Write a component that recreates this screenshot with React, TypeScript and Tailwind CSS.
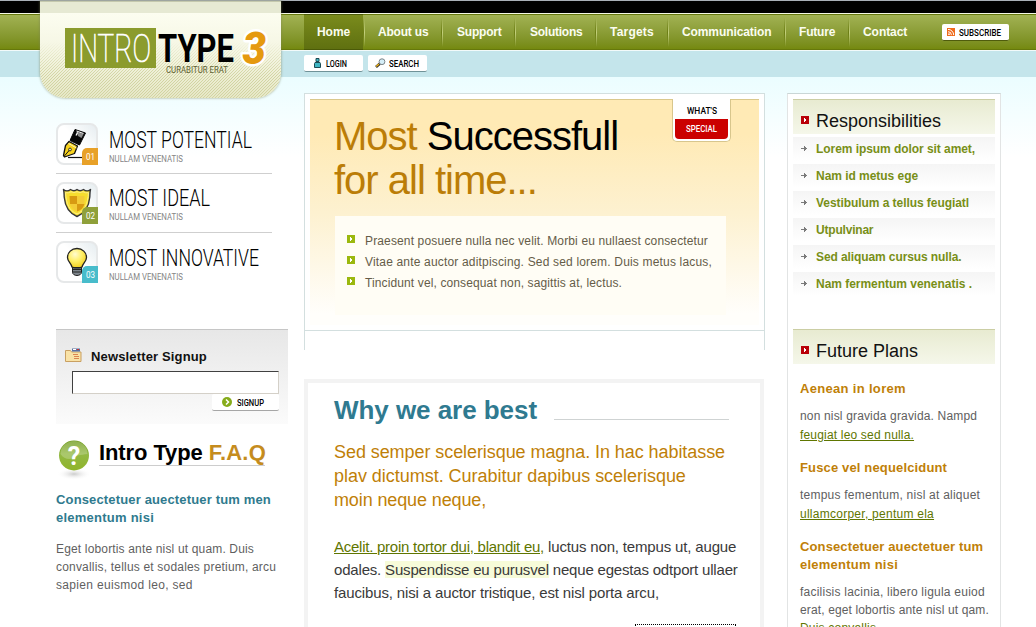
import React from 'react';
import clsx from 'clsx';

// Text squeezed or stretched to a fixed width, used for the condensed and tiny caps lettering
const FitText: React.FC<{
  text: string;
  width: number;
  height: number;
  size: number;
  className?: string;
}> = ({ text, width, height, size, className }) => (
  <svg width={width} height={height} className={clsx('block shrink-0 overflow-visible font-[Roboto,sans-serif]', className)}>
    <text x={0} y={height} fontSize={size} textLength={width} lengthAdjust="spacingAndGlyphs" fill="currentColor">
      {text}
    </text>
  </svg>
);

const navItems = [
  { label: 'Home', box: 'w-[61px] pl-[13px]', tracking: 'tracking-[-0.05px]', active: true },
  { label: 'About us', box: 'w-[78px] pl-[13px]', tracking: 'tracking-[-0.2px]' },
  { label: 'Support', box: 'w-[73px] pl-[14px]', tracking: 'tracking-[-0.2px]' },
  { label: 'Solutions', box: 'w-[81px] pl-[14px]', tracking: 'tracking-[-0.25px]' },
  { label: 'Targets', box: 'w-[72px] pl-[13px]', tracking: 'tracking-[0.2px]' },
  { label: 'Communication', box: 'w-[117px] pl-[13px]', tracking: 'tracking-[-0.1px]' },
  { label: 'Future', box: 'w-[64px] pl-[13px]', tracking: 'tracking-[-0.2px]' },
  { label: 'Contact', box: 'w-[80px] pl-[13px]', tracking: 'tracking-[-0.05px]', last: true },
];

const PenIcon = () => (
  <svg width="42" height="42" viewBox="0 0 42 42" className="absolute inset-0">
    <path d="M12 34.500h16" stroke="#111" strokeWidth="1.200" />
    <path d="M19 6.500 29.500 10 23.500 22 14 17.500z" fill="#080808" stroke="#080808" strokeLinejoin="round" />
    <path d="M20.500 8.500 27.500 11 25.500 15 22 13z" fill="#8a8a8a" />
    <path d="M20.500 8 27.500 10.500" stroke="#fff" />
    <path d="M21.500 9.500 20 12.500" stroke="#fff" strokeWidth="1.300" />
    <path d="M13 18.500 21.500 23 18.500 30.500 8.500 34 7.500 32.500 9.500 22.500z" fill="#f7d21e" stroke="#111" strokeWidth="1.300" strokeLinejoin="round" />
    <path d="M8 33.500 13.500 27" stroke="#111" />
    <circle cx="14" cy="26.500" r="1.400" fill="#fff2a0" stroke="#111" strokeWidth=".8" />
    <path d="M12.500 20.500 20.500 25" stroke="#fff6bc" />
  </svg>
);

const ShieldIcon = () => (
  <svg width="42" height="42" viewBox="0 0 42 42" className="absolute inset-0">
    <path
      d="M7.500 7.500c2.500 2 5 1.500 7 0 2.500 1.700 4.500 1.700 6.500 0 2 1.700 4 1.700 6.500 0 2 1.500 4.500 2 7 0-.8 3-.5 5-.7 7.500-.8 9-4.500 16-12.800 19.500-8.300-3.500-12-10.500-12.800-19.500-.2-2.500.1-4.500-.7-7.500z"
      fill="#f6dd2e"
      stroke="#35363a"
      strokeWidth="1.400"
      strokeLinejoin="round"
    />
    <path d="M9.500 10.500c2 .7 4 .2 5.500-.8 2 1 4 1 6 0 2 1 4 1 6 0 1.500 1 3.500 1.500 5.500.8-.7 11.500-3.500 18-11.500 21.500C13 28.500 10.200 22 9.500 10.500z" fill="none" stroke="#fdf08a" />
    <path d="M13.500 14H21v8h-7z" fill="#d79a12" />
    <path d="M21 14h7.500v8H21z" fill="#f3cc38" />
    <path d="M14 22h7v7.500c-4-1.500-6.200-4-7-7.500z" fill="#f3cc38" />
    <path d="M21 22h7.500c-1 4-4 6.500-7.500 7.500z" fill="#d79a12" />
  </svg>
);

const BulbIcon = () => (
  <svg width="42" height="42" viewBox="0 0 42 42" className="absolute inset-0">
    <defs>
      <radialGradient id="bulb" cx=".4" cy=".3" r=".7">
        <stop offset="0" stopColor="#fffbd0" />
        <stop offset=".5" stopColor="#fff06a" />
        <stop offset="1" stopColor="#f2d020" />
      </radialGradient>
    </defs>
    <path d="M16.500 26h9v5.500c0 1.500-2 3-4.500 3s-4.500-1.500-4.500-3z" fill="#7d858c" stroke="#222" />
    <path d="M16.500 28.500h9M16.500 31h9" stroke="#222" />
    <path
      d="M21 7.500c-5.500 0-9.500 4-9.500 9 0 4 3.500 5.500 4.500 9.500 1 1 9 1 10 0 1-4 4.500-5.500 4.500-9.500 0-5-4-9-9.500-9z"
      fill="url(#bulb)"
      stroke="#222"
      strokeWidth="1.300"
    />
  </svg>
);

const features = [
  { title: 'MOST POTENTIAL', width: 143, num: '01', color: 'bg-[#e8a128]', icon: <PenIcon />, offset: 'pt-[8px]' },
  { title: 'MOST IDEAL', width: 101, num: '02', color: 'bg-[#8fa03a]', icon: <ShieldIcon />, offset: 'pt-[7px]' },
  { title: 'MOST INNOVATIVE', width: 150, num: '03', color: 'bg-[#48bccb]', icon: <BulbIcon />, offset: 'pt-[8px]' },
];

const links = [
  { label: 'Lorem ipsum dolor sit amet,', tracking: 'tracking-[-0.06px]' },
  { label: 'Nam id metus ege', tracking: 'tracking-[-0.04px]' },
  { label: 'Vestibulum a tellus feugiatl', tracking: 'tracking-[-0.06px]' },
  { label: 'Utpulvinar', tracking: 'tracking-[-0.2px]' },
  { label: 'Sed aliquam cursus nulla.', tracking: 'tracking-[-0.1px]' },
  { label: 'Nam fermentum venenatis .', tracking: 'tracking-[-0.03px]' },
];

const heroPoints = [
  { label: 'Praesent posuere nulla nec velit. Morbi eu nullaest consectetur', tracking: 'tracking-[0.14px]' },
  { label: 'Vitae ante auctor aditpiscing. Sed sed lorem. Duis metus lacus,', tracking: 'tracking-[0.175px]' },
  { label: 'Tincidunt vel, consequat non, sagittis at, lectus.', tracking: 'tracking-[0.12px]' },
];

const SquareBullet: React.FC<{ className: string }> = ({ className }) => (
  <svg width="8" height="8" className={clsx('shrink-0', className)}>
    <rect width="8" height="8" fill="currentColor" />
    <path d="M3 2h1v1h1v2H4v1H3z" fill="#fff" />
  </svg>
);

const SmallButton: React.FC<{
  label: string;
  labelWidth: number;
  icon: React.ReactNode;
  className?: string;
}> = ({ label, labelWidth, icon, className }) => (
  <a className={clsx('relative flex h-[17px] items-center rounded-[2px] border-b bg-white text-black', className)}>
    {icon}
    <FitText text={label} width={labelWidth} height={7} size={9.8} className="font-medium" />
  </a>
);

const PanelTitle: React.FC<{ children: React.ReactNode }> = ({ children }) => (
  <div className="flex h-[35px] border-t border-[#cbcea4] bg-linear-to-b from-[#e8ebd1] to-[#f5f7ea] pt-[9px] pl-[8px]">
    <SquareBullet className="mt-[7px] text-[#b90008]" />
    <h2 className="ml-[7px] text-[18px] leading-6 text-[#111]">{children}</h2>
  </div>
);

const Logo = () => (
  <div className="absolute top-px left-[40px] h-[97px] w-[241px] overflow-hidden rounded-b-[26px] bg-linear-to-b from-[#fcfdf0] from-[13%] via-[#f3f4e0] via-[60%] to-[#e6e7c6] shadow-[0_0_2px_1px_rgba(120,130,90,0.35)]">
    {/* diagonal hatch, fading out towards the top */}
    <svg width="241" height="56" shapeRendering="crispEdges" className="absolute bottom-0 left-0 mask-t-from-40%">
      <defs>
        <pattern id="hatch" width="3" height="3" patternUnits="userSpaceOnUse">
          <path d="M2 0h1v1H2zM1 1h1v1H1zM0 2h1v1H0z" fill="#d2d4a2" />
        </pattern>
      </defs>
      <rect width="241" height="56" fill="url(#hatch)" />
    </svg>
    <div className="h-[12px] border-t border-[#c4c8ad] bg-[#e6e9d3]" />
    <div className="relative mt-[15px] flex pl-[25px]">
      <div className="h-[40px] w-[91px] bg-[#8b9b2d] pt-[7px] pl-[6px]">
        <FitText text="INTRO" width={80} height={27} size={38} className="font-thin text-white [stroke:white] [stroke-width:0.7px]" />
      </div>
      <div className="pt-[7px] pl-[2px]">
        <FitText text="TYPE" width={76} height={27} size={38} className="font-bold text-black" />
        <FitText text="CURABITUR ERAT" width={62} height={7} size={9.8} className="mt-[4px] ml-[8px] text-[#5c6030]" />
      </div>
      <svg width="34" height="44" className="ml-[7px] overflow-visible">
        <text
          x="1.500"
          y="35.500"
          fontSize="45"
          textLength="23.500"
          lengthAdjust="spacingAndGlyphs"
          className="fill-[#e5990f] stroke-white font-[Roboto,sans-serif] font-black italic [paint-order:stroke]"
          strokeWidth="5"
          strokeLinejoin="round"
        >
          3
        </text>
      </svg>
    </div>
  </div>
);

const Header = () => (
  <header className="relative">
    <div className="h-[14px] border-t border-b border-t-[#a9b0b8] border-b-[#f3f8e4] bg-black" />
    <nav className="flex h-[36px] border-y border-t-[#66780c] border-b-[#66780c] bg-linear-to-b from-[#a2b253] to-[#75890f] pl-[304px]">
      {navItems.map((item) => (
        <div key={item.label} className={clsx('relative flex h-[34px]', item.box)}>
          {item.active && <div className="absolute -inset-y-px left-0 w-[59px] border-y border-[#4b5a08] bg-linear-to-b from-[#7a8b1c] to-[#5f7010]" />}
          <a className={clsx('relative text-[12px] leading-[34px] font-bold whitespace-nowrap text-[#fbfdf0]', item.tracking)}>{item.label}</a>
          {!item.last && (
            <div className="absolute top-[3px] right-0 flex h-[29px]">
              <i className="w-px bg-linear-to-b from-transparent via-[#6c7e14] to-transparent" />
              <i className="w-px bg-linear-to-b from-transparent via-[#c3d07c] to-transparent" />
            </div>
          )}
        </div>
      ))}
      <SmallButton
        label="SUBSCRIBE"
        labelWidth={42}
        className="mt-[9px] ml-[12px] w-[67px] gap-[4px] border-[#4f5c0c] pl-[5px]"
        icon={
          <svg width="8" height="8">
            <rect width="8" height="8" fill="#ef6a1a" />
            <circle cx="2" cy="6.200" r=".9" fill="#fff" />
            <path d="M1 3.700a3.400 3.400 0 0 1 3.400 3.400M1 1.400a5.700 5.700 0 0 1 5.700 5.700" fill="none" stroke="#fff" />
          </svg>
        }
      />
    </nav>
    <div className="flex h-[27px] gap-[5px] border-t border-[#f2fafa] bg-[#c4e5eb] pt-[4px] pl-[304px]">
      <SmallButton
        label="LOGIN"
        labelWidth={21}
        className="w-[59px] gap-[5px] border-[#6f9298] pl-[10px]"
        icon={
          <svg width="7" height="10">
            <path d="M2 .5h3v3H2zM1 4.500h5l.5 1v4h-6v-4z" fill="#3fb5c3" stroke="#1d4a52" />
          </svg>
        }
      />
      <SmallButton
        label="SEARCH"
        labelWidth={30}
        className="w-[59px] gap-[3px] border-[#6f9298] pl-[7px]"
        icon={
          <svg width="11" height="10">
            <path d="M1 9 5 5.500" stroke="#222" strokeWidth="2.600" />
            <path d="M1.200 8.500 4 6" stroke="#f0b51c" strokeWidth="1.500" />
            <circle cx="7" cy="3.700" r="2.900" fill="#d5eef8" stroke="#7c8488" />
          </svg>
        }
      />
    </div>
    <Logo />
  </header>
);

const LeftColumn = () => (
  <aside className="w-[232px] shrink-0 pt-[46px]">
    <div className="w-[216px]">
      {features.map((f, i) => (
        <div key={f.num} className={clsx('flex', i > 0 && 'mt-2 border-t border-[#cfcfcf] pt-2')}>
          <div className="relative h-[42px] w-[42px] rounded-[8px] border-2 border-[#e6e8e9] bg-linear-to-bl from-[#e6edf0] to-white to-45%">
            <div className="absolute -inset-[2px]">{f.icon}</div>
            <div className={clsx('absolute -right-[2px] -bottom-[2px] flex h-[17px] w-[16px] items-center justify-center rounded-tl-[5px] text-white', f.color)}>
              <FitText text={f.num} width={9} height={7} size={9.8} />
            </div>
          </div>
          <div className={clsx('pl-[11px]', f.offset)}>
            <FitText text={f.title} width={f.width} height={17} size={24} className="font-light text-black" />
            <FitText text="NULLAM VENENATIS" width={74} height={7} size={9.8} className="mt-[7px] text-[#858585]" />
          </div>
        </div>
      ))}
    </div>

    <form className="mt-[46px] h-[95px] border-t border-[#c6c6c6] bg-linear-to-b from-[#e7e7e7] to-[#fbfbfb] pt-[17px]">
      <div className="flex h-5 pl-[9px]">
        <svg width="17" height="14" className="mt-px">
          <path d="M.5 2.500h5l1 1.500h9.500v9.500H.5z" fill="#f9e2a6" stroke="#c9a062" />
          <path d="M7 .5h8v3H7z" fill="#5a70a0" />
          <path d="M8 1.500h3" stroke="#fff" />
          <path d="M12 1.500h2" stroke="#c33" />
          <path d="M8 6.500h5M9 8.500h5M9 10.500h5" stroke="#dc8450" />
        </svg>
        <label className="ml-[9px] text-[13px] leading-5 font-bold tracking-[0.15px] text-[#111]">Newsletter Signup</label>
      </div>
      <input className="mt-[4px] ml-4 block h-[23px] w-[207px] border border-t-[#404040] border-r-[#d4d0c8] border-b-[#d4d0c8] border-l-[#404040] bg-white" />
      <SmallButton
        label="SIGNUP"
        labelWidth={27}
        className="ml-[156px] w-[67px] gap-[5px] border-[#a6a6a6] pl-[10px]"
        icon={
          <svg width="10" height="10">
            <circle cx="5" cy="5" r="5" fill="#86ac1b" />
            <path d="m4 2.500 2.500 2.500L4 7.500" fill="none" stroke="#fff" strokeWidth="1.500" />
          </svg>
        }
      />
    </form>

    <div className="mt-4 flex">
      <svg width="36" height="40" className="-mr-px">
        <defs>
          <linearGradient id="faq" x1="0" y1="0" x2="0" y2="1">
            <stop offset="0" stopColor="#6e9a1c" />
            <stop offset=".45" stopColor="#93b944" />
            <stop offset="1" stopColor="#8fb42a" />
          </linearGradient>
          <radialGradient id="faqShadow">
            <stop offset="0" stopColor="#ccc" />
            <stop offset="1" stopColor="#fff" stopOpacity="0" />
          </radialGradient>
        </defs>
        <ellipse cx="18" cy="34" rx="17" ry="6" fill="url(#faqShadow)" />
        <circle cx="18" cy="15.500" r="15" fill="url(#faq)" />
        <path d="M4.500 14a13.500 13 0 0 1 27 0c-7 1-12 1-15 4-3 2-9 1-12-4z" fill="#fff" opacity=".22" />
        <text x="18" y="24.500" fontSize="25" textAnchor="middle" fill="#fff" className="font-[Roboto,sans-serif] font-bold">
          ?
        </text>
      </svg>
      <h2 className="ml-[8px] h-[26px] w-[166px] border-b border-[#cdcdcd] text-[22px] leading-[25px] font-bold whitespace-nowrap text-black">
        <span className="tracking-[-0.1px]">Intro Type </span>
        <span className="tracking-[0.2px] text-[#c58c1e]">F.A.Q</span>
      </h2>
    </div>

    <h3 className="mt-[11px] text-[13px] leading-[18px] font-bold whitespace-nowrap text-[#2f7a8e]">
      <span className="tracking-[0.15px]">Consectetuer auectetuer tum men</span>
      <br />
      <span className="tracking-[0.24px]">elementum nisi</span>
    </h3>
    <p className="mt-[13px] text-[12px] leading-[18px] whitespace-nowrap text-[#5f5f5f]">
      <span className="tracking-[0.16px]">Eget lobortis ante nisl ut quam. Duis</span>
      <br />
      <span className="tracking-[0.19px]">convallis, tellus et sodales pretium, arcu</span>
      <br />
      <span className="tracking-[0.32px]">sapien euismod leo, sed</span>
    </p>
  </aside>
);

const CenterColumn = () => (
  <main className="w-[461px] shrink-0 pt-4">
    <section className="h-[238px] border border-[#d3dfdf] bg-white p-[5px]">
      <div className="relative h-[226px] border-t border-[#dac88c] bg-linear-to-b from-[#ffeab5] from-15% via-[#fdf1d0] via-50% to-[#fffefb] to-95% pt-[14px]">
        <h1 className="pl-[25px] text-[40px] leading-[44px] whitespace-nowrap text-[#bb7d07]">
          <span className="-ml-px tracking-[-1px]">
            Most <span className="text-black">Successfull</span>
          </span>
          <br />
          <span className="-ml-px tracking-[-1px]">for all time...</span>
        </h1>
        <ul className="mt-[14px] ml-[25px] h-[99px] w-[391px] bg-[#fffdf5] pt-[15px] pl-[12px]">
          {heroPoints.map((p) => (
            <li key={p.label} className="flex h-[21px]">
              <SquareBullet className="mt-[4px] text-[#9bb80e]" />
              <span className={clsx('ml-[10px] text-[12px] leading-[21px] whitespace-nowrap text-[#655c48]', p.tracking)}>{p.label}</span>
            </li>
          ))}
        </ul>
        <div className="absolute -top-px right-[28px] h-[43px] w-[59px] rounded-b-[5px] border border-t-0 border-[#d8c68c] bg-white px-[2px] pt-[8px]">
          <FitText text="WHAT'S" width={30} height={7} size={9.8} className="ml-[12px] font-medium text-black" />
          <div className="mt-[5px] h-[20px] rounded-b-[4px] bg-[#cb0000] pt-[6px] pl-[11px]">
            <FitText text="SPECIAL" width={31} height={7} size={9.8} className="font-medium text-white" />
          </div>
        </div>
      </div>
    </section>
    <div className="h-[19px] border-x border-[#d3dfdf]" />

    <section className="mt-[29px] h-[300px] w-[460px] border-4 border-[#f3f3f3] bg-white pt-[12px] pl-[26px] whitespace-nowrap">
      <div className="flex">
        <h2 className="w-[220px] text-[26px] leading-[30px] font-bold tracking-[-0.05px] text-[#2f7a90]">Why we are best</h2>
        <div className="mt-6 h-px w-[175px] bg-[#cfd3d3]" />
      </div>
      <p className="mt-[15px] text-[18px] leading-6 text-[#bf7f08]">
        <span className="tracking-[-0.07px]">Sed semper scelerisque magna. In hac habitasse</span>
        <br />
        <span className="tracking-[-0.03px]">plav dictumst. Curabitur dapibus scelerisque</span>
        <br />
        <span className="tracking-[-0.12px]">moin neque neque,</span>
      </p>
      <p className="mt-[23px] text-[15px] leading-[23px] text-[#3a3a3a]">
        <a className="tracking-[-0.25px] text-[#5f7600] underline">Acelit. proin tortor dui, blandit eu,</a>
        <span className="tracking-[-0.16px]"> luctus non, tempus ut, augue</span>
        <br />
        <span className="tracking-[-0.18px]">odales. </span>
        <span className="bg-[#f7fbd9] tracking-[-0.17px]">Suspendisse eu purusvel</span>
        <span className="tracking-[-0.19px]"> neque egestas odtport ullaer</span>
        <br />
        <span className="tracking-[-0.14px]">faucibus, nisi a auctor tristique, est nisl porta arcu,</span>
      </p>
      <div className="mt-[20px] ml-[301px] h-[24px] w-[101px] border border-dotted border-black" />
    </section>
  </main>
);

const RightColumn = () => (
  <aside className="h-[600px] w-[214px] shrink-0 pt-4">
    <div className="h-[600px] border border-[#e2e4e4] border-t-[#c9d6d6] bg-white p-[5px]">
      <div className="w-[202px]">
        <PanelTitle>Responsibilities</PanelTitle>
        <ul className="mt-[3px] flex flex-col gap-[3px]">
          {links.map((l) => (
            <li key={l.label} className="flex h-6 items-center bg-linear-to-b from-[#f5f5f5] to-white pl-[8px]">
              <svg width="7" height="5" className="-mt-px" shapeRendering="crispEdges">
                <path d="M0 2h6v1H0zM3 0h1v5H3zM4 1h1v3H4z" fill="#7a7a7a" />
              </svg>
              <a className={clsx('ml-[8px] text-[12px] leading-6 font-bold whitespace-nowrap text-[#788f17]', l.tracking)}>{l.label}</a>
            </li>
          ))}
        </ul>

        <div className="mt-[33px]">
          <PanelTitle>Future Plans</PanelTitle>
        </div>
        <div className="pl-[7px] text-[12px] leading-[19px] whitespace-nowrap text-[#606060]">
          <h3 className="mt-4 text-[13px] leading-[18px] font-bold tracking-[0.32px] text-[#c07f08]">Aenean in lorem</h3>
          <p className="mt-[9px]">
            <span className="tracking-[0.16px]">non nisl gravida gravida. Nampd</span>
            <br />
            <a className="tracking-[0.18px] text-[#5f7600] underline">feugiat leo sed nulla.</a>
          </p>
          <h3 className="mt-[14px] text-[13px] leading-[18px] font-bold tracking-[0.15px] text-[#c07f08]">Fusce vel nequelcidunt</h3>
          <p className="mt-[9px]">
            <span className="tracking-[0.23px]">tempus fementum, nisl at aliquet</span>
            <br />
            <a className="tracking-[0.26px] text-[#5f7600] underline">ullamcorper, pentum ela</a>
          </p>
          <h3 className="mt-[14px] text-[13px] leading-[18px] font-bold text-[#c07f08]">
            <span className="tracking-[0.12px]">Consectetuer auectetuer tum</span>
            <br />
            <span className="tracking-[0.24px]">elementum nisi</span>
          </h3>
          <p className="mt-[9px] leading-[18px]">
            <span className="tracking-[0.23px]">facilisis lacinia, libero ligula euiod</span>
            <br />
            <span className="tracking-[0.13px]">erat, eget lobortis ante nisl ut qam.</span>
            <br />
            <a className="tracking-[0.2px] text-[#5f7600] underline">Duis convallis</a>
          </p>
        </div>
      </div>
    </div>
  </aside>
);

export default function App() {
  return (
    <div className="h-[627px] w-[1036px] overflow-hidden bg-white font-['Liberation_Sans',Arial,sans-serif]">
      <Header />
      <div className="flex bg-linear-to-b from-[#ebfdff] to-white to-[80px] pl-14">
        <LeftColumn />
        <div className="ml-4 flex">
          <CenterColumn />
        </div>
        <div className="ml-[22px]">
          <RightColumn />
        </div>
      </div>
    </div>
  );
}
